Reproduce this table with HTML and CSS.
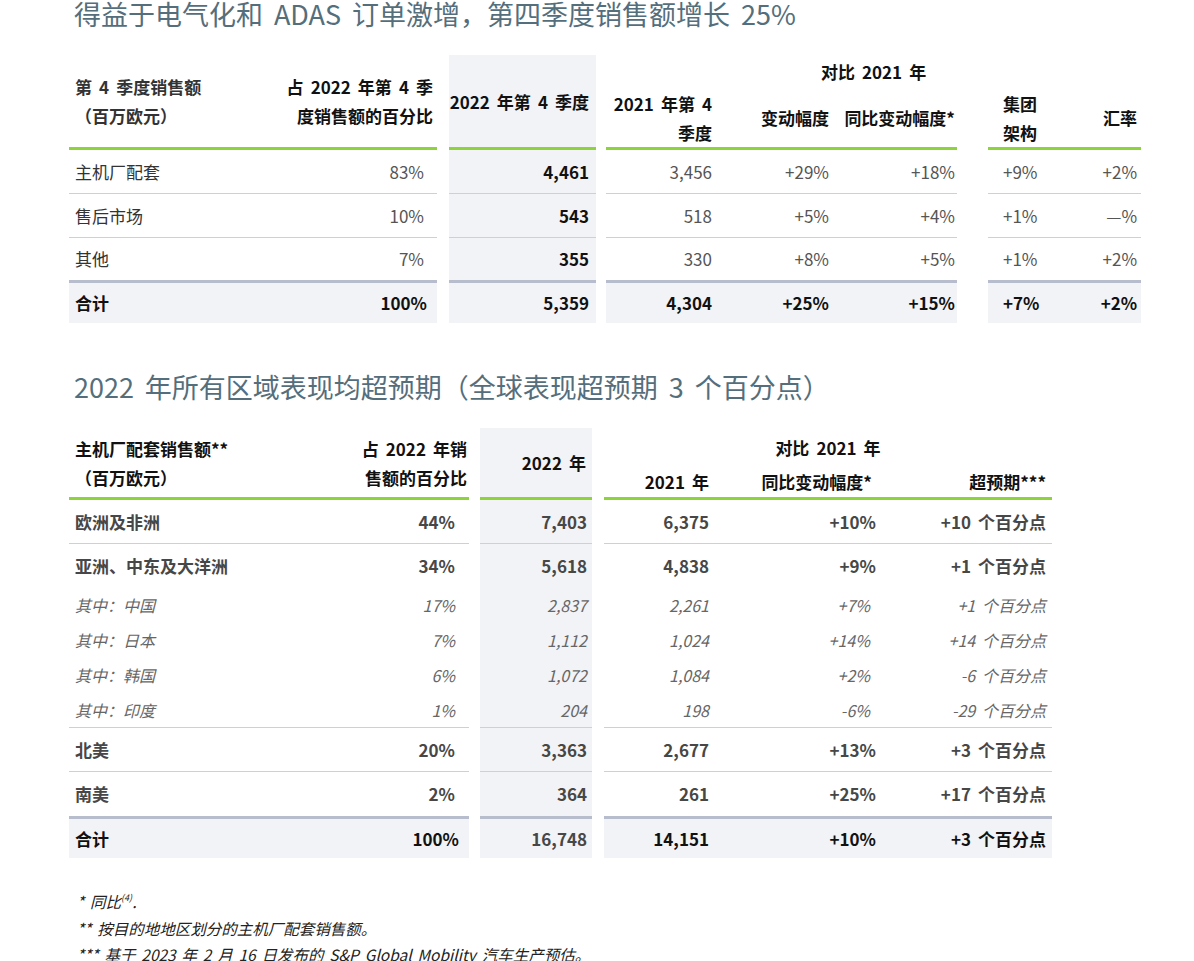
FILE: index.html
```html
<!DOCTYPE html>
<html lang="zh-CN">
<head>
<meta charset="utf-8">
<title>第四季度销售额</title>
<link rel="stylesheet" href="styles.css">
</head>
<body>
<main class="page">
  <h1 class="title">得益于电气化和 ADAS 订单激增，第四季度销售额增长 25%</h1>

  <table class="t t1">
    <colgroup>
      <col class="a1"><col class="a2"><col class="g12"><col class="a3"><col class="g10"><col class="a4"><col class="a5"><col class="a6"><col class="g31"><col class="a7"><col class="a8">
    </colgroup>
    <thead>
      <tr class="ha">
        <th rowspan="2" class="lbl">第 4 季度销售额<br>（百万欧元）</th>
        <th rowspan="2" class="r p4">占 2022 年第 4 季<br>度销售额的百分比</th>
        <th rowspan="2" class="sp"></th>
        <th rowspan="2" class="hl r p7">2022 年第 4 季度</th>
        <th rowspan="2" class="sp"></th>
        <th colspan="6" class="ctr">对比 2021 年</th>
      </tr>
      <tr class="hb">
        <th class="r p6">2021 年第 4<br>季度</th>
        <th class="r p4">变动幅度</th>
        <th class="r p2">同比变动幅度*</th>
        <th class="sp"></th>
        <th class="l15">集团<br>架构</th>
        <th class="r p4">汇率</th>
      </tr>
    </thead>
    <tbody>
      <tr class="row">
        <td class="lbl">主机厂配套</td><td class="r p13">83%</td><td class="sp"></td><td class="hl r p7 b">4,461</td><td class="sp"></td>
        <td class="r p6">3,456</td><td class="r p4">+29%</td><td class="r p2">+18%</td><td class="sp"></td><td class="l15">+9%</td><td class="r p4">+2%</td>
      </tr>
      <tr class="row">
        <td class="lbl">售后市场</td><td class="r p13">10%</td><td class="sp"></td><td class="hl r p7 b">543</td><td class="sp"></td>
        <td class="r p6">518</td><td class="r p4">+5%</td><td class="r p2">+4%</td><td class="sp"></td><td class="l15">+1%</td><td class="r p4">—%</td>
      </tr>
      <tr class="row thick r45">
        <td class="lbl">其他</td><td class="r p13">7%</td><td class="sp"></td><td class="hl r p7 b">355</td><td class="sp"></td>
        <td class="r p6">330</td><td class="r p4">+8%</td><td class="r p2">+5%</td><td class="sp"></td><td class="l15">+1%</td><td class="r p4">+2%</td>
      </tr>
      <tr class="tot r40">
        <td class="lbl">合计</td><td class="r p10">100%</td><td class="sp"></td><td class="hl r p7">5,359</td><td class="sp"></td>
        <td class="r p6">4,304</td><td class="r p4">+25%</td><td class="r p2">+15%</td><td class="sp"></td><td class="l15">+7%</td><td class="r p4">+2%</td>
      </tr>
    </tbody>
  </table>

  <h2 class="title title-2">2022 年所有区域表现均超预期（全球表现超预期 3 个百分点）</h2>

  <table class="t t2">
    <colgroup>
      <col class="b1"><col class="b2"><col class="g11"><col class="b3"><col class="g12"><col class="b4"><col class="b5"><col class="b6">
    </colgroup>
    <thead>
      <tr class="ha">
        <th rowspan="2" class="lbl">主机厂配套销售额**<br>（百万欧元）</th>
        <th rowspan="2" class="r p2">占 2022 年销<br>售额的百分比</th>
        <th rowspan="2" class="sp"></th>
        <th rowspan="2" class="hl r p6">2022 年</th>
        <th rowspan="2" class="sp"></th>
        <th colspan="3" class="ctr">对比 2021 年</th>
      </tr>
      <tr class="hb">
        <th class="r p6">2021 年</th>
        <th class="r p8">同比变动幅度*</th>
        <th class="r p6">超预期***</th>
      </tr>
    </thead>
    <tbody>
      <tr class="row main">
        <td class="lbl">欧洲及非洲</td><td class="r p14">44%</td><td class="sp"></td><td class="hl r p5">7,403</td><td class="sp"></td>
        <td class="r p6">6,375</td><td class="r p4">+10%</td><td class="r p6">+10 个百分点</td>
      </tr>
      <tr class="row main nb r43">
        <td class="lbl">亚洲、中东及大洋洲</td><td class="r p14">34%</td><td class="sp"></td><td class="hl r p5">5,618</td><td class="sp"></td>
        <td class="r p6">4,838</td><td class="r p4">+9%</td><td class="r p6">+1 个百分点</td>
      </tr>
      <tr class="row sub nb">
        <td class="lbl">其中：中国</td><td class="r p14">17%</td><td class="sp"></td><td class="hl r p5">2,837</td><td class="sp"></td>
        <td class="r p6">2,261</td><td class="r p10">+7%</td><td class="r p6">+1 个百分点</td>
      </tr>
      <tr class="row sub nb">
        <td class="lbl">其中：日本</td><td class="r p14">7%</td><td class="sp"></td><td class="hl r p5">1,112</td><td class="sp"></td>
        <td class="r p6">1,024</td><td class="r p10">+14%</td><td class="r p6">+14 个百分点</td>
      </tr>
      <tr class="row sub nb">
        <td class="lbl">其中：韩国</td><td class="r p14">6%</td><td class="sp"></td><td class="hl r p5">1,072</td><td class="sp"></td>
        <td class="r p6">1,084</td><td class="r p10">+2%</td><td class="r p6">-6 个百分点</td>
      </tr>
      <tr class="row sub r36">
        <td class="lbl">其中：印度</td><td class="r p14">1%</td><td class="sp"></td><td class="hl r p5">204</td><td class="sp"></td>
        <td class="r p6">198</td><td class="r p10">-6%</td><td class="r p6">-29 个百分点</td>
      </tr>
      <tr class="row main">
        <td class="lbl">北美</td><td class="r p14">20%</td><td class="sp"></td><td class="hl r p5">3,363</td><td class="sp"></td>
        <td class="r p6">2,677</td><td class="r p4">+13%</td><td class="r p6">+3 个百分点</td>
      </tr>
      <tr class="row main thick r47">
        <td class="lbl">南美</td><td class="r p14">2%</td><td class="sp"></td><td class="hl r p5">364</td><td class="sp"></td>
        <td class="r p6">261</td><td class="r p4">+25%</td><td class="r p6">+17 个百分点</td>
      </tr>
      <tr class="tot r39">
        <td class="lbl">合计</td><td class="r p10">100%</td><td class="sp"></td><td class="hl r p5 reg">16,748</td><td class="sp"></td>
        <td class="r p6">14,151</td><td class="r p4">+10%</td><td class="r p6">+3 个百分点</td>
      </tr>
    </tbody>
  </table>

  <div class="notes">
    <p class="note">* 同比<sup>(4)</sup>.</p>
    <p class="note">** 按目的地地区划分的主机厂配套销售额。</p>
    <p class="note">*** 基于 2023 年 2 月 16 日发布的 S&amp;P Global Mobility 汽车生产预估。</p>
  </div>
</main>
</body>
</html>
```

FILE: styles.css
```css
* { box-sizing: border-box; }

html, body {
  margin: 0;
  padding: 0;
  background: #ffffff;
}

body {
  font-family: "Noto Sans CJK SC", "Noto Sans", sans-serif;
  color: #333333;
  word-spacing: 0.2em;
}

.page {
  padding-left: 69px;
}

.title {
  margin: 0;
  padding-left: 5px;
  font-size: 27px;
  font-weight: 400;
  line-height: 28px;
  color: #546e7c;
  word-spacing: 0.18em;
}

.title-2 {
  margin-top: 50px;
}

/* tables */
.t {
  border-collapse: separate;
  border-spacing: 0;
  table-layout: fixed;
  margin-top: 27px;
}

.t1 { width: 1072px; }
.t2 { width: 983px; }

.t1 .a1 { width: 211px; }
.t1 .a2 { width: 157px; }
.t1 .a3 { width: 147px; }
.t1 .a4 { width: 112px; }
.t1 .a5 { width: 115px; }
.t1 .a6 { width: 124px; }
.t1 .a7 { width: 72px; }
.t1 .a8 { width: 81px; }

.t2 .b1 { width: 261px; }
.t2 .b2 { width: 139px; }
.t2 .b3 { width: 112px; }
.t2 .b4 { width: 111px; }
.t2 .b5 { width: 165px; }
.t2 .b6 { width: 172px; }

.g10 { width: 10px; }
.g11 { width: 11px; }
.g12 { width: 12px; }
.g31 { width: 31px; }

.t th,
.t td {
  padding: 0;
  vertical-align: middle;
  white-space: nowrap;
  overflow: visible;
}

.t th {
  font-size: 17px;
  font-weight: 700;
  line-height: 29px;
  color: #111111;
}

.t td {
  font-size: 17px;
  font-weight: 400;
  line-height: 24px;
  color: #555555;
}

.t1 .ha { height: 33px; }
.t1 .hb { height: 62px; }
.t2 .ha { height: 38px; }
.t2 .hb { height: 34px; }

.t thead th:not(.sp):not(.ctr) {
  border-bottom: 3px solid #8dd43c;
}

.ctr { text-align: center; }
.lbl { text-align: left; padding-left: 6px !important; }
.r { text-align: right; }
.l15 { text-align: left; padding-left: 15px !important; }

.p2 { padding-right: 2px !important; }
.p4 { padding-right: 4px !important; }
.p5 { padding-right: 5px !important; }
.p6 { padding-right: 6px !important; }
.p7 { padding-right: 7px !important; }
.p8 { padding-right: 8px !important; }
.p10 { padding-right: 10px !important; }
.p13 { padding-right: 13px !important; }
.p14 { padding-right: 14px !important; }

.hl { background: #f2f3f6; }

/* body rows */
.row { height: 44px; }
.row td:not(.sp) { border-bottom: 1px solid #cdd0da; }
.row.nb td:not(.sp) { border-bottom: 0; }
.row.thick td:not(.sp) { border-bottom: 3px solid #b8bdcd; }

.r45 { height: 45px !important; }
.r47 { height: 47px !important; }
.r43 { height: 43px !important; }
.r36 { height: 36px !important; }
.r40 { height: 40px; }
.r39 { height: 39px; }

.t1 .lbl { color: #333333; }
.t td.b { font-weight: 700; color: #111111; }

.tot td:not(.sp) {
  background: #f2f3f6;
  font-weight: 700;
  color: #111111;
}
.tot td.reg { color: #474747; }

.main td { font-weight: 700; color: #474747; }

.sub { height: 35px; }
.sub td {
  font-size: 16px;
  font-style: italic;
  color: #666666;
}

/* notes */
.notes {
  margin-top: 30px;
  padding-left: 8px;
}

.note {
  margin: 0;
  font-size: 15.5px;
  font-style: italic;
  line-height: 26.5px;
  color: #222222;
  word-spacing: 0.15em;
}

.note sup {
  font-size: 9px;
  line-height: 0;
  vertical-align: 7px;
}
```
